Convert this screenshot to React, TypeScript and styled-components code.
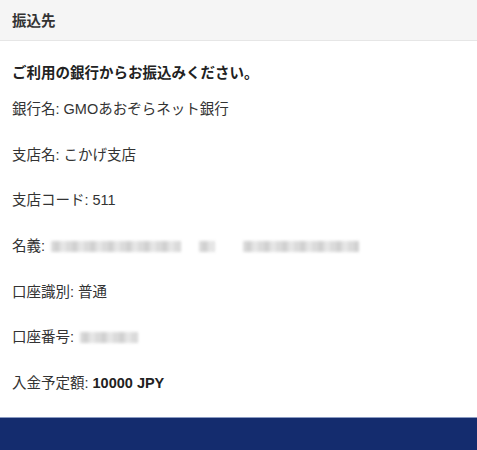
import styled, { createGlobalStyle } from "styled-components";

const GlobalStyle = createGlobalStyle`
    html, body {
        margin: 0;
        padding: 0;
        background: #ffffff;
    }
    body {
        font-family: "Liberation Sans", "Noto Sans CJK JP", sans-serif;
        color: #333333;
    }
`

const Page = styled.div`
    display: flex;
    flex-direction: column;
    width: 477px;
    height: 450px;
    overflow: hidden;
`

const Header = styled.div`
    display: flex;
    flex-shrink: 0;
    align-items: center;
    height: 41px;
    padding: 0 12px 2px;
    box-sizing: border-box;
    background-color: #f5f5f5;
    border-bottom: 1px solid #e6e6e6;
    font-size: 14.5px;
    font-weight: bold;
    color: #333;
`

const Content = styled.div`
    display: flex;
    flex-direction: column;
    flex: 1 1 0;
    min-height: 0;
    overflow: hidden;
    padding: 22px 12px 0;
`

const Title = styled.div`
    font-size: 14.5px;
    font-weight: bold;
    line-height: 20px;
    color: #222;
    margin-bottom: 16px;
`

const Row = styled.div`
    display: flex;
    flex-shrink: 0;
    align-items: center;
    font-size: 14.5px;
    line-height: 20px;
    height: 20px;
    margin-bottom: 25.7px;
    color: #333;
`

const Value = styled.span<{ $bold?: boolean }>`
    margin-left: 4px;
    font-weight: ${(p) => (p.$bold ? "bold" : "normal")};
    color: ${(p) => (p.$bold ? "#222" : "#333")};
`

const Masked = styled.span<{ $width: number }>`
    display: inline-block;
    margin-left: 6px;
    width: ${(p) => p.$width}px;
    height: 11px;
    background: repeating-linear-gradient(
        90deg,
        #dcdcdc 0px,
        #c8c8c8 6px,
        #e8e8e8 12px,
        #d2d2d2 18px
    );
    filter: blur(1.5px);
    opacity: 0.9;
`

const Gap = styled.span<{ $width: number }>`
    display: inline-block;
    width: ${(p) => p.$width}px;
`

const FooterBar = styled.div`
    flex-shrink: 0;
    height: 32px;
    background-color: #142c6e;
    border-top: 1px solid #8b9bc2;
`

function App() {
    return (
        <Page>
            <GlobalStyle />
            <Header>振込先</Header>
            <Content>
                <Title>ご利用の銀行からお振込みください。</Title>
                <Row>銀行名:<Value>GMOあおぞらネット銀行</Value></Row>
                <Row>支店名:<Value>こかげ支店</Value></Row>
                <Row>支店コード:<Value>511</Value></Row>
                <Row>
                    名義:
                    <Masked $width={130} />
                    <Gap $width={12} />
                    <Masked $width={16} />
                    <Gap $width={22} />
                    <Masked $width={116} />
                </Row>
                <Row>口座識別:<Value>普通</Value></Row>
                <Row>口座番号:<Masked $width={58} /></Row>
                <Row>入金予定額:<Value $bold>10000 JPY</Value></Row>
            </Content>
            <FooterBar />
        </Page>
    );
}

export default App;
